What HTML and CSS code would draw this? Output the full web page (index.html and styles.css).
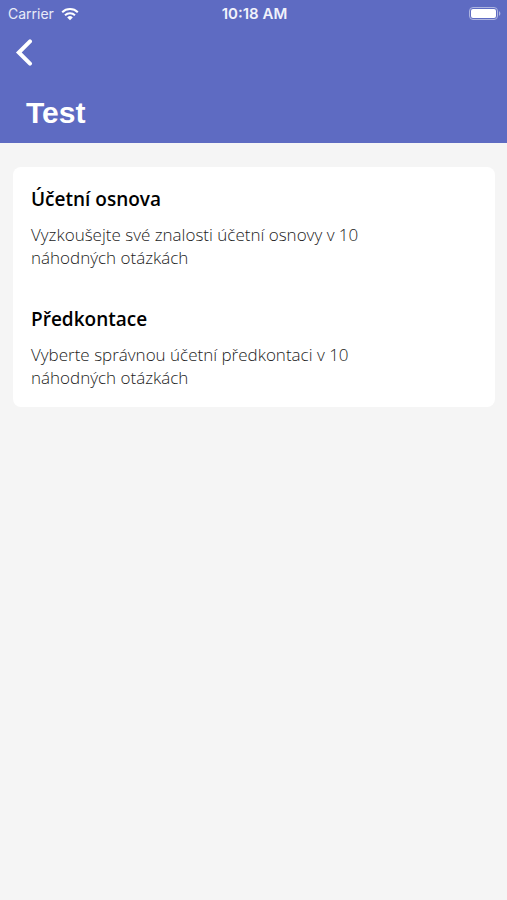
FILE: index.html
```html
<!DOCTYPE html>
<html lang="cs">
<head>
<meta charset="utf-8">
<meta name="viewport" content="width=device-width, initial-scale=1">
<title>Test</title>
<link rel="stylesheet" href="styles.css">
</head>
<body>
<header class="header">
  <div class="status">
    <div class="carrier">
      <span>Carrier</span>
      <svg class="wifi" width="18" height="14" viewBox="0 0 18 14" aria-hidden="true">
        <path d="M1.2 5.2a11.2 11.2 0 0 1 15.6 0M4 8.3a7.2 7.2 0 0 1 10 0" />
        <path class="dot" d="M9 13.2 6.2 10.4a4 4 0 0 1 5.6 0z" />
      </svg>
    </div>
    <time class="clock">10:18 AM</time>
    <svg class="battery" width="32" height="14" viewBox="0 0 32 14" aria-hidden="true">
      <rect class="shell" x="0.5" y="0.5" width="28" height="12" rx="3.5" />
      <rect class="level" x="2" y="2" width="25" height="9" rx="2" />
      <path class="tip" d="M30 4.2c1.8.6 1.8 4 0 4.6z" />
    </svg>
  </div>
  <button class="back" type="button" aria-label="Zpět">
    <svg width="18" height="28" viewBox="0 0 18 28" aria-hidden="true"><path d="M15 3.4 3.8 14.5 15 25.6" /></svg>
  </button>
  <h1 class="title">Test</h1>
</header>
<main class="content">
  <div class="card">
    <a class="item" href="#osnova">
      <h2>Účetní osnova</h2>
      <p>Vyzkoušejte své znalosti účetní osnovy v 10 náhodných otázkách</p>
    </a>
    <a class="item" href="#predkontace">
      <h2>Předkontace</h2>
      <p>Vyberte správnou účetní předkontaci v 10 náhodných otázkách</p>
    </a>
  </div>
</main>
</body>
</html>
```
FILE: styles.css
```css
* { box-sizing: border-box; }
body {
  margin: 0;
  min-height: 100vh;
  background: #f5f5f5;
  color: #000;
  font-family: "Open Sans", sans-serif;
}
.header { background: #5e6bc2; color: #fff; padding-bottom: 8px; }
.status {
  display: grid;
  grid-template-columns: 1fr auto 1fr;
  align-items: center;
  height: 27px;
  padding: 0 6px 0 8px;
  font-family: Inter, sans-serif;
  font-size: 14px;
}
.carrier { display: flex; align-items: center; gap: 7px; color: #e9ebf8; }
.wifi path { fill: none; stroke: #fff; stroke-width: 2; }
.wifi .dot { fill: #fff; stroke: none; }
.clock { font-size: 15px; font-weight: 600; color: #f1f2fb; }
.battery { justify-self: end; }
.shell { fill: none; stroke: #aeb5e0; }
.level { fill: #fff; }
.tip { fill: #aeb5e0; }
.back {
  display: block;
  margin: 11px 0 0 15px;
  padding: 0;
  border: 0;
  background: none;
  height: 28px;
  cursor: pointer;
}
.back path { fill: none; stroke: #fff; stroke-width: 4; stroke-linecap: round; }
.title {
  margin: 25px 26px 0;
  font-family: "Liberation Sans", sans-serif;
  font-size: 30px;
  line-height: 44px;
  font-weight: 700;
}
.content { padding: 24px 12px 24px 13px; }
.card { background: #fff; border-radius: 8px; }
.item {
  display: block;
  padding: 18px;
  color: inherit;
  text-decoration: none;
}
.item h2 { margin: 0 0 10px; font-size: 19px; line-height: 28px; font-weight: 600; }
.item p { margin: 0; max-width: 360px; font-size: 17px; line-height: 23px; font-weight: 300; color: #1c1c1c; }
```
